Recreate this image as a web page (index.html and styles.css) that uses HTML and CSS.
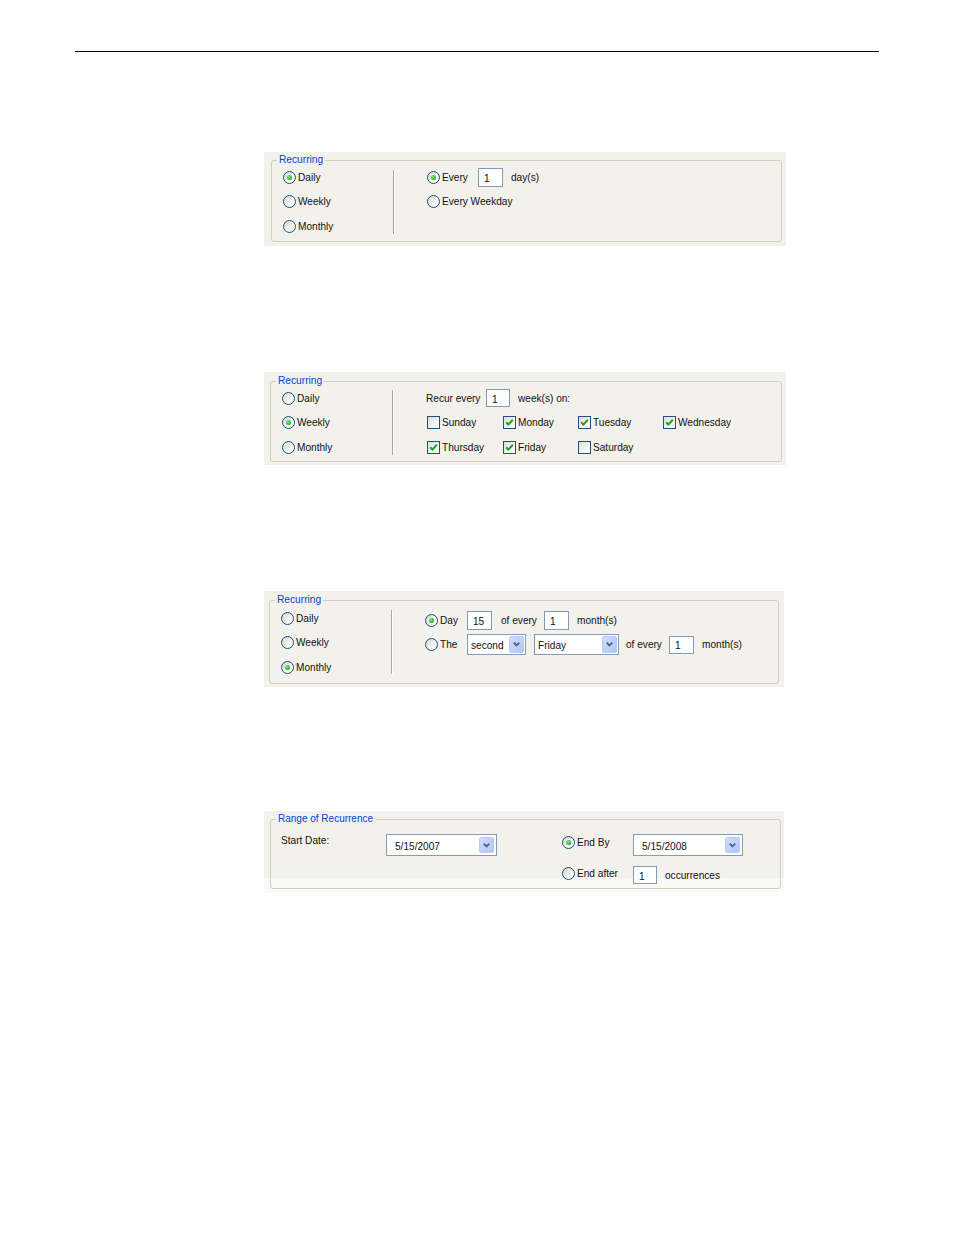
FILE: index.html
```html
<!DOCTYPE html>
<html>
<head>
<meta charset="utf-8">
<title>Recurrence</title>
<link rel="stylesheet" href="styles.css">
</head>
<body>
<div class="rule"></div>

<section class="panel p1">
  <div class="group">
    <span class="legend">Recurring</span>
    <div class="modes">
      <div class="row"><span class="radio on"></span><span>Daily</span></div>
      <div class="row"><span class="radio"></span><span>Weekly</span></div>
      <div class="row"><span class="radio"></span><span>Monthly</span></div>
    </div>
    <div class="sep"></div>
    <div class="opts">
      <div class="row">
        <span class="opt w51"><span class="radio on"></span><span>Every</span></span>
        <span class="box w25 h19">1</span>
        <span class="ml8">day(s)</span>
      </div>
      <div class="row">
        <span class="opt"><span class="radio"></span><span>Every Weekday</span></span>
      </div>
    </div>
  </div>
</section>

<section class="panel p2">
  <div class="group">
    <span class="legend">Recurring</span>
    <div class="modes">
      <div class="row"><span class="radio"></span><span>Daily</span></div>
      <div class="row"><span class="radio on"></span><span>Weekly</span></div>
      <div class="row"><span class="radio"></span><span>Monthly</span></div>
    </div>
    <div class="sep"></div>
    <div class="opts">
      <div class="row">
        <span class="w60">Recur every</span>
        <span class="box w24 h18">1</span>
        <span class="ml8">week(s) on:</span>
      </div>
      <div class="days">
        <span class="opt"><span class="check"></span><span>Sunday</span></span>
        <span class="opt"><span class="check on"><svg viewBox="0 0 11 11" width="11" height="11"><path d="M2.2 5.2 L4.4 7.6 L8.8 2.8" fill="none" stroke="#21a121" stroke-width="2"/></svg></span><span>Monday</span></span>
        <span class="opt"><span class="check on"><svg viewBox="0 0 11 11" width="11" height="11"><path d="M2.2 5.2 L4.4 7.6 L8.8 2.8" fill="none" stroke="#21a121" stroke-width="2"/></svg></span><span>Tuesday</span></span>
        <span class="opt"><span class="check on"><svg viewBox="0 0 11 11" width="11" height="11"><path d="M2.2 5.2 L4.4 7.6 L8.8 2.8" fill="none" stroke="#21a121" stroke-width="2"/></svg></span><span>Wednesday</span></span>
        <span class="opt"><span class="check on"><svg viewBox="0 0 11 11" width="11" height="11"><path d="M2.2 5.2 L4.4 7.6 L8.8 2.8" fill="none" stroke="#21a121" stroke-width="2"/></svg></span><span>Thursday</span></span>
        <span class="opt"><span class="check on"><svg viewBox="0 0 11 11" width="11" height="11"><path d="M2.2 5.2 L4.4 7.6 L8.8 2.8" fill="none" stroke="#21a121" stroke-width="2"/></svg></span><span>Friday</span></span>
        <span class="opt"><span class="check"></span><span>Saturday</span></span>
      </div>
    </div>
  </div>
</section>

<section class="panel p3">
  <div class="group">
    <span class="legend">Recurring</span>
    <div class="modes">
      <div class="row"><span class="radio"></span><span>Daily</span></div>
      <div class="row"><span class="radio"></span><span>Weekly</span></div>
      <div class="row"><span class="radio on"></span><span>Monthly</span></div>
    </div>
    <div class="sep"></div>
    <div class="opts">
      <div class="row">
        <span class="opt w42"><span class="radio on"></span><span>Day</span></span>
        <span class="box w25 h19">15</span>
        <span class="ml9 w43">of every</span>
        <span class="box w25 h19">1</span>
        <span class="ml8">month(s)</span>
      </div>
      <div class="row">
        <span class="opt w42"><span class="radio"></span><span>The</span></span>
        <span class="select w59 h21"><span class="val">second</span><span class="drop"><svg viewBox="0 0 7 5" width="7" height="5"><path d="M0.7 0.7 L3.5 3.5 L6.3 0.7" fill="none" stroke="#4d6185" stroke-width="1.8"/></svg></span></span>
        <span class="select w85 h21 ml8"><span class="val">Friday</span><span class="drop"><svg viewBox="0 0 7 5" width="7" height="5"><path d="M0.7 0.7 L3.5 3.5 L6.3 0.7" fill="none" stroke="#4d6185" stroke-width="1.8"/></svg></span></span>
        <span class="ml7 w43">of every</span>
        <span class="box w25 h18">1</span>
        <span class="ml8">month(s)</span>
      </div>
    </div>
  </div>
</section>

<section class="panel p4">
  <div class="group range">
    <span class="legend">Range of Recurrence</span>
    <div class="rrow r1">
      <span class="w105 txt">Start Date:</span>
      <span class="select wide w111 h22"><span class="val">5/15/2007</span><span class="drop"><svg viewBox="0 0 7 5" width="7" height="5"><path d="M0.7 0.7 L3.5 3.5 L6.3 0.7" fill="none" stroke="#4d6185" stroke-width="1.8"/></svg></span></span>
      <span class="opt w71 ml65 mt2"><span class="radio on"></span><span>End By</span></span>
      <span class="select wide w110 h22"><span class="val">5/15/2008</span><span class="drop"><svg viewBox="0 0 7 5" width="7" height="5"><path d="M0.7 0.7 L3.5 3.5 L6.3 0.7" fill="none" stroke="#4d6185" stroke-width="1.8"/></svg></span></span>
    </div>
    <div class="rrow r2">
      <span class="opt w71 ml281 mt1"><span class="radio"></span><span>End after</span></span>
      <span class="box w24 h18">1</span>
      <span class="ml8 txt mt3">occurrences</span>
    </div>
  </div>
</section>
</body>
</html>
```

FILE: styles.css
```css
html, body {
  margin: 0;
  padding: 0;
  background: #fff;
}
body {
  font-family: "Liberation Sans", Arial, sans-serif;
  font-size: 10.1px;
  line-height: 13px;
  color: #111;
}

.rule {
  margin: 51px 0 0 75px;
  width: 804px;
  height: 0;
  border-top: 1px solid #000;
}

.panel {
  box-sizing: border-box;
  margin-left: 264px;
  background: #f2f1ec;
}
.p1 { margin-top: 100px; width: 522px; height: 94px; padding: 8px 4px 4px 7px; }
.p2 { margin-top: 126px; width: 522px; height: 93px; padding: 9px 4px 3px 6px; }
.p3 { margin-top: 126px; width: 520px; height: 96px; padding: 9px 5px 3px 5px; }
.p4 {
  margin-top: 124px; width: 520px; height: 82px; padding: 8px 3px 4px 6px;
  background: linear-gradient(to bottom, #f2f1ec 0, #f2f1ec 67px, #f9f9f7 67px);
}

.group {
  position: relative;
  box-sizing: border-box;
  height: 100%;
  border: 1px solid #d0d0bf;
  border-radius: 3px;
  display: flex;
  align-items: flex-start;
}
.legend {
  position: absolute;
  left: 5px;
  top: -8px;
  padding: 0 2px;
  background: #f2f1ec;
  color: #0046d5;
  font-size: 10.2px;
  line-height: 13px;
  white-space: nowrap;
}
.range .legend { font-size: 10px; }

.modes {
  box-sizing: border-box;
  width: 121px;
  padding: 4px 0 0 11px;
  flex: none;
}
.p3 .modes { padding-top: 5px; }

.row {
  display: flex;
  align-items: center;
  height: 24.5px;
  white-space: nowrap;
}

.sep {
  flex: none;
  width: 0;
  height: 64px;
  margin-top: 9px;
  border-left: 1px solid #aca899;
  border-right: 1px solid #fff;
}
.p2 .sep { margin-top: 8px; height: 65px; }

.opts {
  margin-left: 32px;
  padding-top: 4px;
}
.p3 .opts { padding-top: 7px; }

.opt {
  display: inline-flex;
  align-items: center;
  white-space: nowrap;
  flex: none;
}

.radio {
  position: relative;
  box-sizing: border-box;
  flex: none;
  width: 13px;
  height: 13px;
  margin-right: 2px;
  border: 1px solid #1c5180;
  border-radius: 50%;
  background: linear-gradient(135deg, #d6d4cc 0%, #f2f2ef 55%, #ffffff 100%);
}
.radio.on::after {
  content: "";
  position: absolute;
  left: 3px;
  top: 3px;
  width: 5px;
  height: 5px;
  border-radius: 50%;
  background: radial-gradient(circle at 40% 35%, #8cf08a 0%, #3cc43a 45%, #1f9a1f 100%);
}

.check {
  box-sizing: border-box;
  flex: none;
  width: 13px;
  height: 13px;
  margin-right: 2px;
  border: 1px solid #1c5180;
  background: linear-gradient(135deg, #dcdcd7 0%, #f4f4f1 60%, #ffffff 100%);
  display: flex;
  align-items: center;
  justify-content: center;
}
.check svg { display: block; }

.days {
  margin-left: 1px;
  display: grid;
  grid-template-columns: 76px 75px 85px auto;
  grid-auto-rows: 24.5px;
  align-items: center;
}

.box {
  box-sizing: border-box;
  flex: none;
  display: inline-flex;
  align-items: center;
  padding: 2px 0 0 5px;
  background: #fff;
  border: 1px solid #7f9db9;
}

.select {
  box-sizing: border-box;
  flex: none;
  display: inline-flex;
  align-items: center;
  justify-content: space-between;
  background: #fff;
  border: 1px solid #7f9db9;
  padding: 1px 1px 1px 3px;
}
.select .val { padding-top: 2px; }
.select.wide { padding: 2px 2px 2px 8px; }
.drop {
  box-sizing: border-box;
  width: 15px;
  height: 100%;
  display: flex;
  align-items: center;
  justify-content: center;
  background: linear-gradient(135deg, #cfdcfd 0%, #bcd0fb 60%, #aec6f7 100%);
  border: 1px solid #b7cbf7;
  border-radius: 2px;
}
.drop svg { display: block; }

.range {
  flex-direction: column;
  padding: 14px 0 0 10px;
}
.rrow {
  display: flex;
  align-items: flex-start;
  white-space: nowrap;
}
.r1 { height: 22px; }
.r2 { margin-top: 10px; }
.txt { line-height: 13px; }

.w24 { width: 24px; }
.w25 { width: 25px; }
.w42 { width: 42px; }
.w43 { width: 43px; }
.w51 { width: 51px; }
.w59 { width: 59px; }
.w60 { width: 60px; }
.w71 { width: 71px; }
.w85 { width: 85px; }
.w105 { width: 105px; }
.w110 { width: 110px; }
.w111 { width: 111px; }
.h18 { height: 18px; }
.h19 { height: 19px; }
.h21 { height: 21px; }
.h22 { height: 22px; }
.ml7 { margin-left: 7px; }
.ml8 { margin-left: 8px; }
.ml9 { margin-left: 9px; }
.ml65 { margin-left: 65px; }
.ml281 { margin-left: 281px; }
.mt1 { margin-top: 1px; }
.mt2 { margin-top: 1.5px; }
.mt3 { margin-top: 2.5px; }
```
